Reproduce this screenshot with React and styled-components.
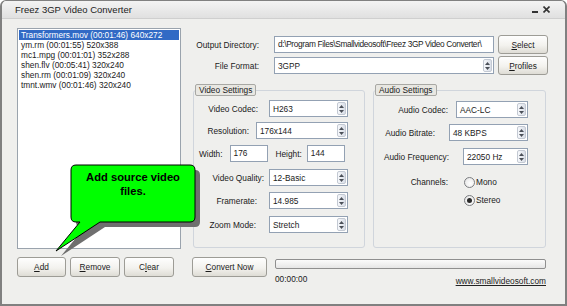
import React from "react";
import styled, { createGlobalStyle } from "styled-components";

const GlobalStyle = createGlobalStyle`
  html, body { margin: 0; padding: 0; background: #ffffff; }
  body { font-family: "Liberation Sans", Arial, sans-serif; }
`;

const Screen = styled.div`
  position: relative;
  width: 567px;
  height: 306px;
  overflow: hidden;
`;

const Window = styled.div`
  box-sizing: border-box;
  width: 567px;
  height: 306px;
  display: flex;
  flex-direction: column;
  background: #efefed;
  border: 2px solid #808080;
  border-top-width: 1px;
  border-radius: 6px 6px 0 0;
  font-family: "Liberation Sans", Arial, sans-serif;
  font-size: 8.3px;
  color: #1a1a1a;
`;

const TitleBar = styled.div`
  height: 17px;
  display: flex;
  align-items: center;
  justify-content: space-between;
  padding: 0 15px 0 13px;
  background: linear-gradient(#f3f3f3, #e0e0e0);
  border-bottom: 1px solid #cfcfcf;
  border-radius: 5px 5px 0 0;
`;

const Title = styled.span`
  font-size: 9.5px;
  color: #222;
`;

const Controls = styled.div`
  display: flex;
  align-items: center;
  gap: 5px;
`;

const Body = styled.div`
  flex: 1;
  display: flex;
  padding: 9px 17px 0 15px;
`;

const LeftCol = styled.div`
  width: 164px;
  display: flex;
  flex-direction: column;
`;

const ListBox = styled.div`
  box-sizing: border-box;
  height: 221px;
  border: 1px solid #9aa3ad;
  background: #ffffff;
  padding: 1px;
`;

const ListItem = styled.div`
  height: 10px;
  line-height: 10px;
  padding-left: 2px;
  white-space: nowrap;
  background: ${(p) => (p.$selected ? "#316ac5" : "transparent")};
  color: ${(p) => (p.$selected ? "#ffffff" : "#1a1a1a")};
`;

const ButtonRow = styled.div`
  display: flex;
  gap: 4px;
  margin-top: 8px;
`;

const Button = styled.div`
  box-sizing: border-box;
  width: ${(p) => p.$w}px;
  height: ${(p) => p.$h || 20}px;
  display: flex;
  align-items: center;
  justify-content: center;
  border: 1px solid #9d9c96;
  border-radius: 3px;
  background: linear-gradient(#fefefe, #f3f2ee 55%, #dedcd5);
  color: #1a1a1a;
  white-space: nowrap;
  u { text-decoration: underline; }
`;

const RightCol = styled.div`
  margin-left: 11px;
  width: 356px;
  display: flex;
  flex-direction: column;
  padding-top: 7px;
`;

const FieldRow = styled.div`
  display: flex;
  align-items: center;
  height: 19px;
  margin-top: ${(p) => p.$mt || 0}px;
`;

const TopLabel = styled.span`
  width: 67px;
  text-align: right;
  margin-right: 15px;
  white-space: nowrap;
`;

const TextBox = styled.div`
  box-sizing: border-box;
  width: ${(p) => p.$w}px;
  height: ${(p) => p.$h || 17}px;
  margin-right: ${(p) => p.$mr || 0}px;
  border: 1px solid #93a1b3;
  background: #ffffff;
  padding-left: 3px;
  line-height: 15px;
  letter-spacing: ${(p) => p.$ls || 0}px;
  overflow: hidden;
  white-space: nowrap;
`;

const ComboBox = styled.div`
  box-sizing: border-box;
  width: ${(p) => p.$w}px;
  height: 17px;
  margin-right: ${(p) => p.$mr || 0}px;
  display: flex;
  align-items: center;
  justify-content: space-between;
  border: 1px solid #93a1b3;
  background: #ffffff;
  padding-left: 3px;
  white-space: nowrap;
`;

const Spinner = styled.div`
  box-sizing: border-box;
  width: 9px;
  height: 13px;
  margin-right: 1px;
  display: flex;
  flex-direction: column;
  align-items: center;
  justify-content: center;
  gap: 2px;
  border: 1px solid #c3c9d3;
  border-radius: 2px;
  background: linear-gradient(to right, #f6f8fb, #d9dee7);
`;

const GroupsRow = styled.div`
  display: flex;
  gap: 8px;
  margin-top: 9px;
  padding-left: 1px;
`;

const Group = styled.fieldset`
  box-sizing: border-box;
  width: ${(p) => p.$w}px;
  height: 164px;
  margin: 0;
  padding: 0 ${(p) => p.$pr}px 0 0;
  border: 1px solid #d0d5dc;
  border-radius: 3px;
  min-width: 0;
`;

const Legend = styled.legend`
  box-sizing: border-box;
  height: 12px;
  line-height: 10px;
  margin-left: 1px;
  padding: 0 3px;
  border: 1px solid #a8a8a4;
  border-radius: 2px;
  background: #e8e7e2;
  color: #1a1a1a;
`;

const SettingRow = styled.div`
  display: flex;
  align-items: center;
  justify-content: flex-end;
  height: 17px;
  margin-top: ${(p) => p.$mt}px;
`;

const RowLabel = styled.span`
  margin-right: ${(p) => p.$gap}px;
  white-space: nowrap;
`;

const DimRow = styled.div`
  display: flex;
  align-items: center;
  height: 17px;
  margin-top: ${(p) => p.$mt}px;
  padding-left: 5px;
`;

const ChannelRow = styled.div`
  display: flex;
  align-items: flex-start;
  margin-top: ${(p) => p.$mt}px;
`;

const ChannelLabel = styled.span`
  width: 74px;
  text-align: right;
  line-height: 18px;
`;

const RadioGroup = styled.div`
  display: flex;
  flex-direction: column;
  margin-left: 16px;
`;

const RadioItem = styled.div`
  display: flex;
  align-items: center;
  height: 18px;
  gap: 1px;
`;

const RadioDot = styled.span`
  box-sizing: border-box;
  width: 11px;
  height: 11px;
  border-radius: 50%;
  border: 1px solid #7b7d80;
  background: radial-gradient(circle at 60% 60%, #ffffff, #e2e2e2);
  display: flex;
  align-items: center;
  justify-content: center;
  &::after {
    content: "";
    display: ${(p) => (p.$checked ? "block" : "none")};
    width: 5px;
    height: 5px;
    border-radius: 50%;
    background: #2a2a2a;
  }
`;

const BottomRow = styled.div`
  display: flex;
  margin-top: 9px;
`;

const ProgressArea = styled.div`
  flex: 1;
  margin-left: 8px;
  padding-right: 2px;
  display: flex;
  flex-direction: column;
`;

const ProgressBar = styled.div`
  box-sizing: border-box;
  height: 10px;
  margin-top: 2px;
  border: 1px solid #8f8f8f;
  border-radius: 2px;
  background: linear-gradient(#fbfbfb, #e6e6e6);
`;

const StatusLine = styled.div`
  display: flex;
  justify-content: space-between;
  align-items: flex-start;
  margin-top: 5px;
  line-height: 10px;
`;

const Link = styled.span`
  margin-top: 2px;
  text-decoration: underline;
  color: #222;
`;

const Callout = styled.div`
  position: absolute;
  left: 50px;
  top: 160px;
  width: 160px;
  height: 100px;
  pointer-events: none;
  svg { position: absolute; left: 0; top: 0; }
`;

const CalloutText = styled.div`
  position: relative;
  width: 124px;
  margin-left: 21px;
  padding-top: 10px;
  text-align: center;
  font-family: "Liberation Sans", Arial, sans-serif;
  font-weight: bold;
  font-size: 11.2px;
  line-height: 14px;
  color: #000;
`;

const files = [
  "Transformers.mov (00:01:46) 640x272",
  "ym.rm (00:01:55) 520x388",
  "mc1.mpg (00:01:01) 352x288",
  "shen.flv (00:05:41) 320x240",
  "shen.rm (00:01:09) 320x240",
  "tmnt.wmv (00:01:46) 320x240",
];

const Combo = ({ value, w, mr }) => (
  <ComboBox $w={w} $mr={mr}>
    <span>{value}</span>
    <Spinner>
      <svg width="5" height="3" viewBox="0 0 5 3">
        <path d="M2.5 0 L5 3 H0 Z" fill="#4a4f58" />
      </svg>
      <svg width="5" height="3" viewBox="0 0 5 3">
        <path d="M0 0 H5 L2.5 3 Z" fill="#4a4f58" />
      </svg>
    </Spinner>
  </ComboBox>
);

const App = () => {
  return (
    <Screen>
      <GlobalStyle />
      <Window>
        <TitleBar>
          <Title>Freez 3GP Video Converter</Title>
          <Controls>
            <svg width="6" height="8" viewBox="0 0 6 8">
              <rect x="0" y="5" width="6" height="2" fill="#333" />
            </svg>
            <svg width="7" height="7" viewBox="0 0 7 7">
              <path d="M0.5 0.5 L6.5 6.5 M6.5 0.5 L0.5 6.5" stroke="#333" strokeWidth="1.6" />
            </svg>
          </Controls>
        </TitleBar>
        <Body>
          <LeftCol>
            <ListBox>
              {files.map((f, i) => (
                <ListItem key={f} $selected={i === 0}>{f}</ListItem>
              ))}
            </ListBox>
            <ButtonRow>
              <Button $w={49}><span><u>A</u>dd</span></Button>
              <Button $w={50}><span><u>R</u>emove</span></Button>
              <Button $w={50}><span>C<u>l</u>ear</span></Button>
            </ButtonRow>
          </LeftCol>

          <RightCol>
            <FieldRow>
              <TopLabel>Output Directory:</TopLabel>
              <TextBox $w={220} $mr={4} $ls={-0.35}>d:\Program Files\Smallvideosoft\Freez 3GP Video Converter\</TextBox>
              <Button $w={50} $h={19}><span><u>S</u>elect</span></Button>
            </FieldRow>
            <FieldRow $mt={2}>
              <TopLabel>File Format:</TopLabel>
              <Combo value="3GPP" w={220} mr={4} />
              <Button $w={50} $h={19}><span><u>P</u>rofiles</span></Button>
            </FieldRow>

            <GroupsRow>
              <Group $w={172} $pr={16}>
                <Legend>Video Settings</Legend>
                <SettingRow $mt={4}>
                  <RowLabel $gap={11}>Video Codec:</RowLabel>
                  <Combo value="H263" w={79} />
                </SettingRow>
                <SettingRow $mt={5}>
                  <RowLabel $gap={7}>Resolution:</RowLabel>
                  <Combo value="176x144" w={92} />
                </SettingRow>
                <DimRow $mt={6}>
                  <RowLabel $gap={7}>Width:</RowLabel>
                  <TextBox $w={38} $mr={8}>176</TextBox>
                  <RowLabel $gap={5}>Height:</RowLabel>
                  <TextBox $w={38}>144</TextBox>
                </DimRow>
                <SettingRow $mt={7}>
                  <RowLabel $gap={5}>Video Quality:</RowLabel>
                  <Combo value="12-Basic" w={79} />
                </SettingRow>
                <SettingRow $mt={6}>
                  <RowLabel $gap={12}>Framerate:</RowLabel>
                  <Combo value="14.985" w={79} />
                </SettingRow>
                <SettingRow $mt={7}>
                  <RowLabel $gap={13}>Zoom Mode:</RowLabel>
                  <Combo value="Stretch" w={79} />
                </SettingRow>
              </Group>

              <Group $w={173} $pr={17}>
                <Legend>Audio Settings</Legend>
                <SettingRow $mt={5}>
                  <RowLabel $gap={8}>Audio Codec:</RowLabel>
                  <Combo value="AAC-LC" w={72} />
                </SettingRow>
                <SettingRow $mt={6}>
                  <RowLabel $gap={14}>Audio Bitrate:</RowLabel>
                  <Combo value="48 KBPS" w={79} />
                </SettingRow>
                <SettingRow $mt={7}>
                  <RowLabel $gap={14}>Audio Frequency:</RowLabel>
                  <Combo value="22050 Hz" w={65} />
                </SettingRow>
                <ChannelRow $mt={8}>
                  <ChannelLabel>Channels:</ChannelLabel>
                  <RadioGroup>
                    <RadioItem>
                      <RadioDot />
                      <span>Mono</span>
                    </RadioItem>
                    <RadioItem>
                      <RadioDot $checked />
                      <span>Stereo</span>
                    </RadioItem>
                  </RadioGroup>
                </ChannelRow>
              </Group>
            </GroupsRow>

            <BottomRow>
              <Button $w={75}><span><u>C</u>onvert Now</span></Button>
              <ProgressArea>
                <ProgressBar />
                <StatusLine>
                  <span>00:00:00</span>
                  <Link>www.smallvideosoft.com</Link>
                </StatusLine>
              </ProgressArea>
            </BottomRow>
          </RightCol>
        </Body>
      </Window>

      <Callout>
        <svg width="160" height="100" viewBox="0 0 160 100">
          <path
            transform="translate(5 5)"
            d="M26,5 H140 Q145,5 145,10 V57 Q145,62 140,62 H50 L6,91 L30,62 H26 Q21,62 21,57 V10 Q21,5 26,5 Z"
            fill="#6f6f6f"
          />
          <path
            d="M26,5 H140 Q145,5 145,10 V57 Q145,62 140,62 H50 L6,91 L30,62 H26 Q21,62 21,57 V10 Q21,5 26,5 Z"
            fill="#00ff00"
            stroke="#000"
            strokeWidth="1"
          />
        </svg>
        <CalloutText>
          Add source video
          <br />
          files.
        </CalloutText>
      </Callout>
    </Screen>
  );
};

export default App;
